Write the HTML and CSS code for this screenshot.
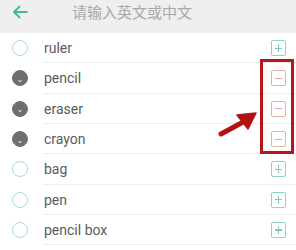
FILE: index.html
```html
<!DOCTYPE html>
<html>
<head>
<meta charset="utf-8">
<link rel="stylesheet" href="styles.css">
</head>
<body>
<div class="page">
  <div class="header">
    <svg class="back" width="16" height="14" viewBox="0 0 16 14"><path d="M15 7H2M7.5 1.5L2 7l5.5 5.5" fill="none" stroke="#3fb898" stroke-width="1.8" stroke-linecap="round" stroke-linejoin="round"/></svg>
    <span class="placeholder">请输入英文或中文</span>
  </div>
  <ul class="list">
    <li class="row"><span class="radio"></span><span class="word">ruler</span><span class="btn add"></span></li>
    <li class="row"><span class="radio on"><svg width="16" height="16" viewBox="0 0 16 16"><path d="M6.5 10.5l1.5 1 1.5-1" fill="none" stroke="#fff" stroke-width="1"/></svg></span><span class="word">pencil</span><span class="btn del"></span></li>
    <li class="row"><span class="radio on"><svg width="16" height="16" viewBox="0 0 16 16"><path d="M6.5 10.5l1.5 1 1.5-1" fill="none" stroke="#fff" stroke-width="1"/></svg></span><span class="word">eraser</span><span class="btn del"></span></li>
    <li class="row"><span class="radio on"><svg width="16" height="16" viewBox="0 0 16 16"><path d="M6.5 10.5l1.5 1 1.5-1" fill="none" stroke="#fff" stroke-width="1"/></svg></span><span class="word">crayon</span><span class="btn del"></span></li>
    <li class="row"><span class="radio"></span><span class="word">bag</span><span class="btn add"></span></li>
    <li class="row"><span class="radio"></span><span class="word">pen</span><span class="btn add"></span></li>
    <li class="row"><span class="radio"></span><span class="word">pencil box</span><span class="btn add"></span></li>
  </ul>
  <div class="highlight"></div>
  <svg class="arrow" width="42" height="32" viewBox="0 0 42 32"><path d="M4 27L28 14" stroke="#b31212" stroke-width="5" stroke-linecap="round"/><path d="M39 6L20 8 31 22z" fill="#b31212" stroke="#b31212" stroke-width="1.5" stroke-linejoin="round"/></svg>
</div>
</body>
</html>
```
FILE: styles.css
```css
* { box-sizing: border-box; }
html, body { margin: 0; padding: 0; background: #fff; }
.page { position: relative; width: 296px; height: 250px; overflow: hidden; font-family: Roboto, "Noto Sans CJK SC", sans-serif; }
.header { height: 33px; background: #eeefee; display: flex; align-items: center; padding-left: 12px; padding-bottom: 10px; }
.back { flex: none; }
.placeholder { margin-left: 44px; font-size: 15px; color: #a9a9a9; font-family: "Noto Sans CJK SC", sans-serif; letter-spacing: 0; }
.list { list-style: none; margin: 0; padding: 0; }
.row { height: 30.33px; display: flex; align-items: center; position: relative; }
.row::after { content: ""; position: absolute; left: 43px; right: 0; bottom: 0; height: 1px; background: #eeeeee; }
.radio { flex: none; width: 16px; height: 16px; margin-left: 12px; border: 1.5px solid #a6dccf; border-radius: 50%; display: flex; }
.radio.on { background: #6f6f6f; border-color: #6f6f6f; }
.radio svg { margin: -1.5px; }
.word { margin-left: 16px; font-size: 14px; color: #5c5c5c; flex: 1; }
.btn { flex: none; width: 15px; height: 16px; margin-right: 10px; border: 1.3px solid #8dd3c0; border-radius: 2px; position: relative; }
.btn::before { content: ""; position: absolute; left: 3px; right: 3px; top: 50%; height: 1.3px; margin-top: -0.65px; background: #7fcab6; }
.btn.add::after { content: ""; position: absolute; top: 3px; bottom: 3px; left: 50%; width: 1.3px; margin-left: -0.65px; background: #7fcab6; }
.btn.del { border-color: #dfb3a0; }
.btn.del::before { background: #d9a894; }
.highlight { position: absolute; left: 260px; top: 59px; width: 34px; height: 95px; border: 3px solid #b7141b; }
.arrow { position: absolute; left: 217px; top: 107px; }
```
